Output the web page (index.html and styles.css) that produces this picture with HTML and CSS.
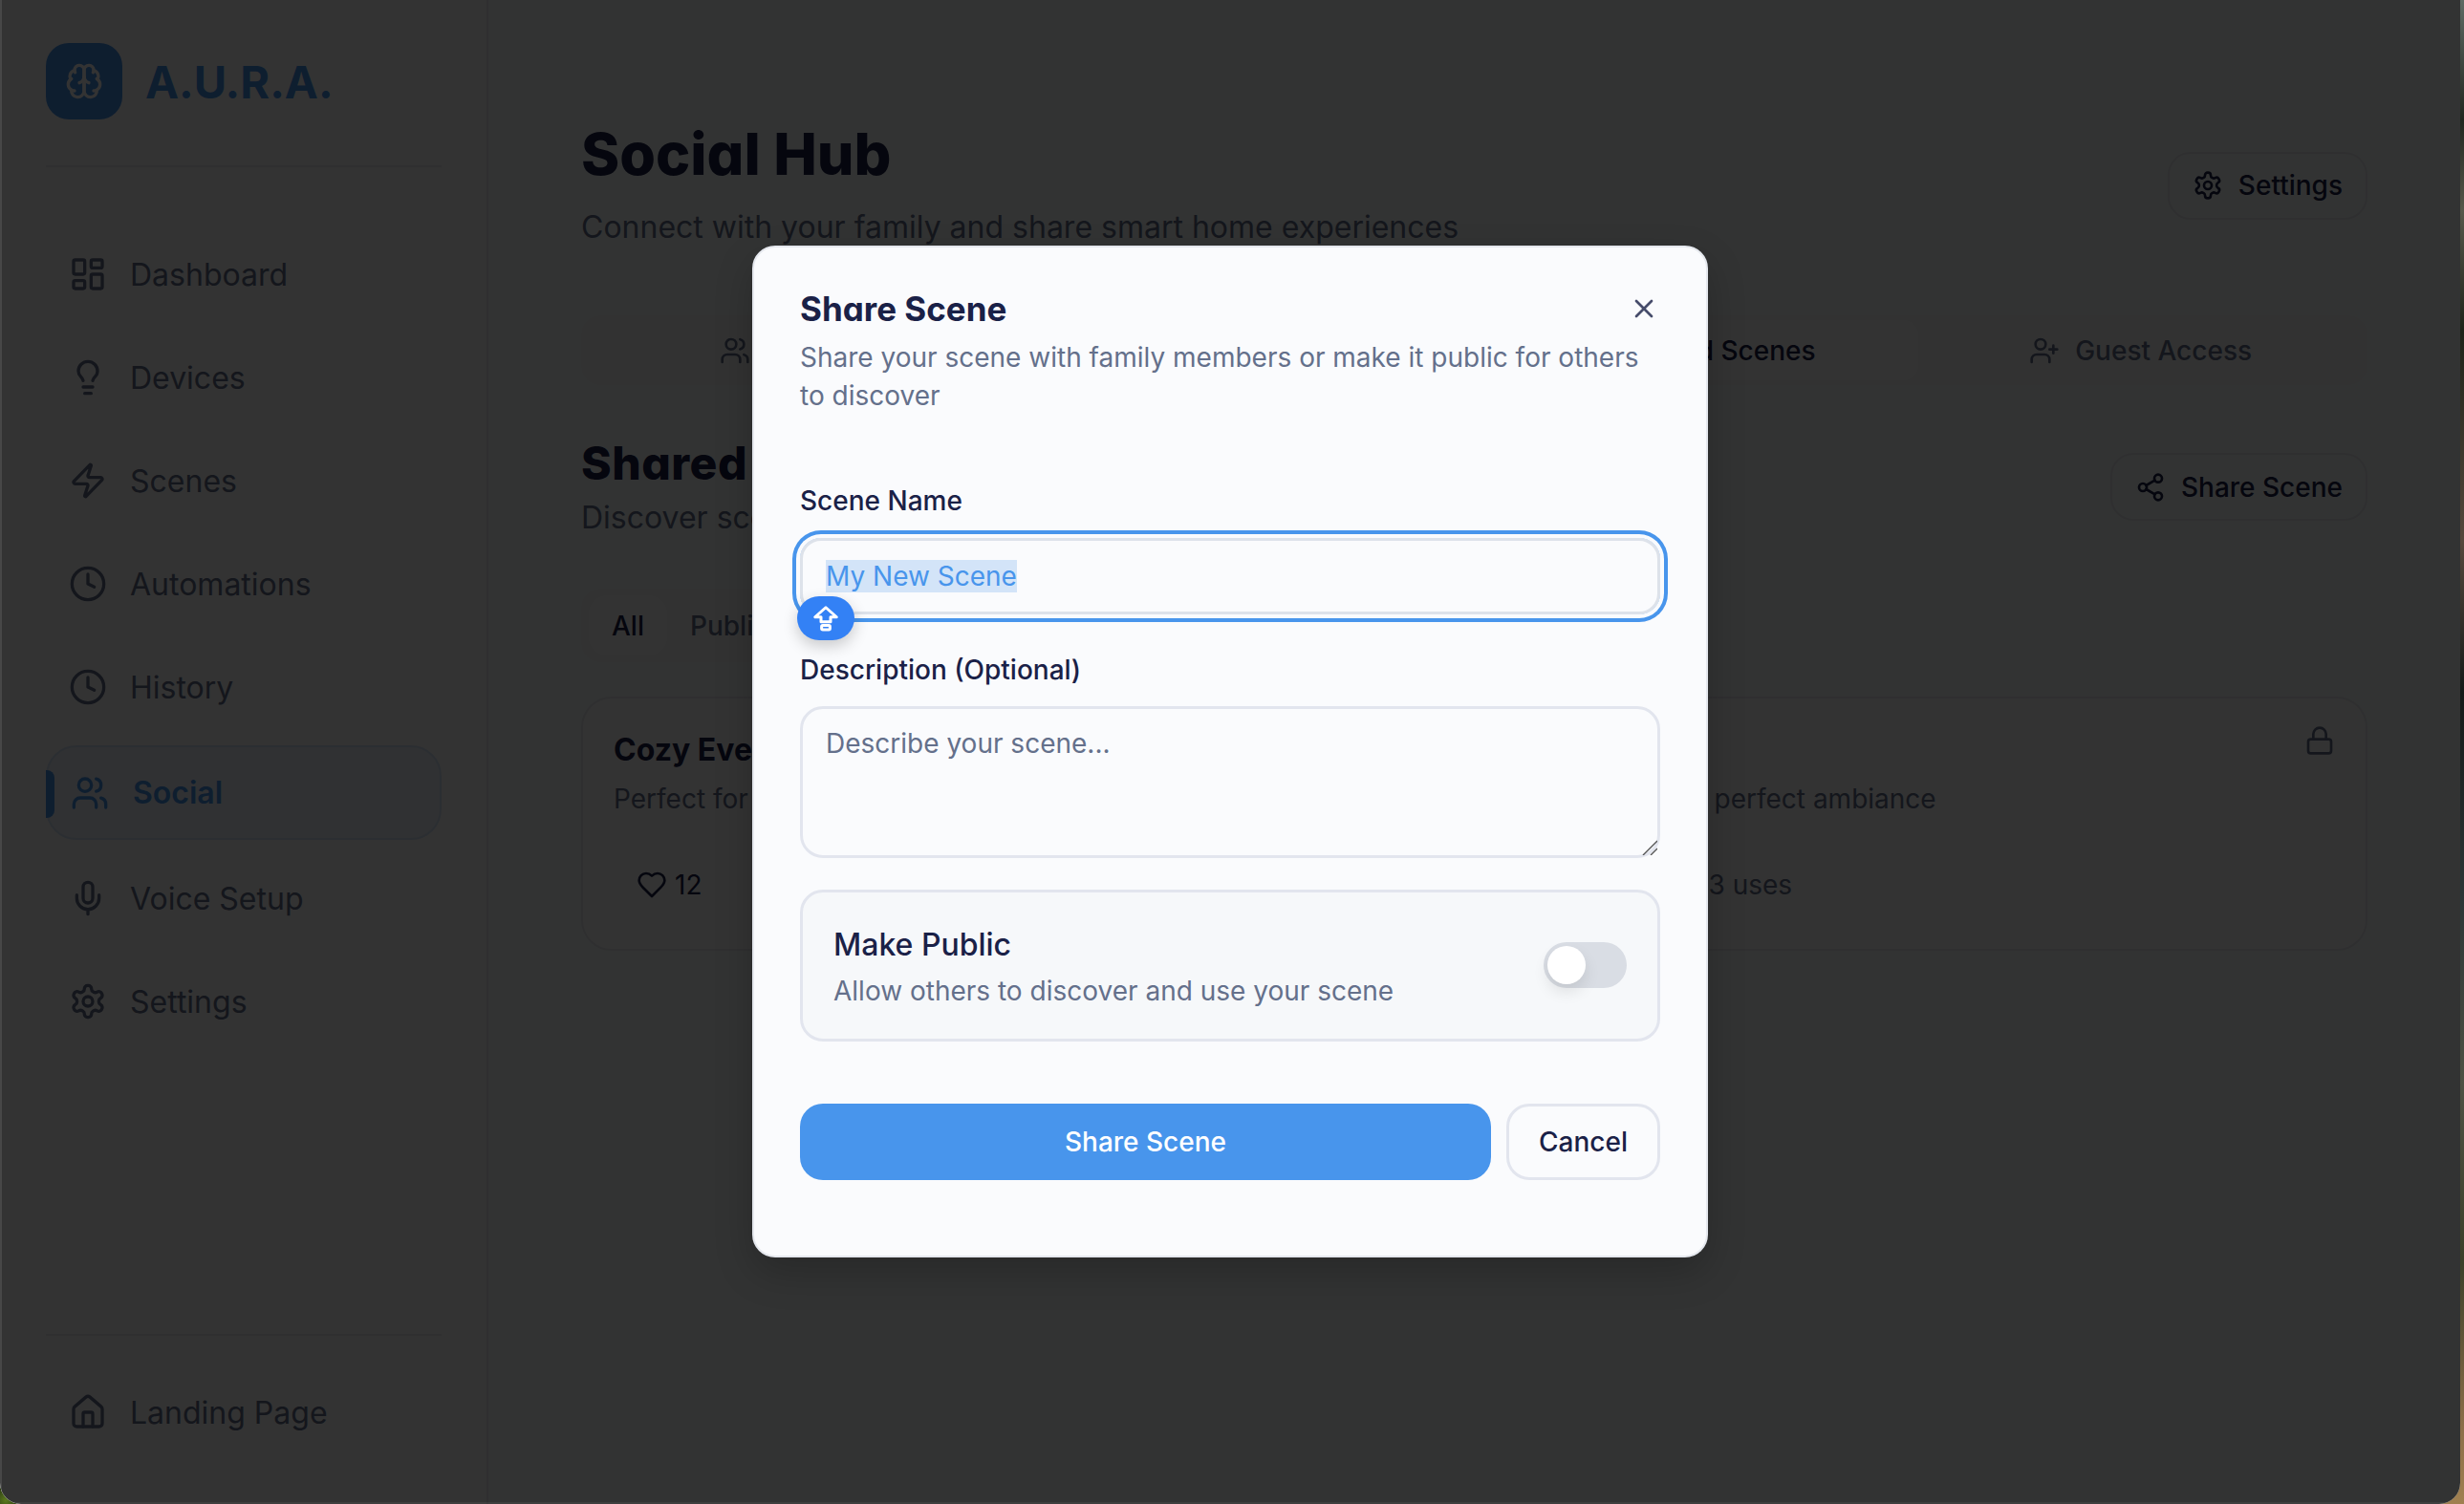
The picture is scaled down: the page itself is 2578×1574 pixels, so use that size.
FILE: index.html
```html
<!DOCTYPE html>
<html lang="en">
<head>
  <meta charset="UTF-8">
  <title>A.U.R.A. - Social Hub</title>
  <link rel="stylesheet" href="styles.css">
</head>
<body>
  <svg class="sprite" width="0" height="0">
    <symbol id="i-brain" viewBox="0 0 24 24"><path d="M12 5a3 3 0 1 0-5.997.125 4 4 0 0 0-2.526 5.77 4 4 0 0 0 .556 6.588A4 4 0 1 0 12 18Z"/><path d="M12 5a3 3 0 1 1 5.997.125 4 4 0 0 1 2.526 5.77 4 4 0 0 1-.556 6.588A4 4 0 1 1 12 18Z"/><path d="M15 13a4.5 4.5 0 0 1-3-4 4.5 4.5 0 0 1-3 4"/><path d="M17.599 6.5a3 3 0 0 0 .399-1.375"/><path d="M6.003 5.125A3 3 0 0 0 6.401 6.5"/><path d="M3.477 10.896a4 4 0 0 1 .585-.396"/><path d="M19.938 10.5a4 4 0 0 1 .585.396"/><path d="M6 18a4 4 0 0 1-1.967-.516"/><path d="M19.967 17.484A4 4 0 0 1 18 18"/></symbol>
    <symbol id="i-dashboard" viewBox="0 0 24 24"><rect x="3" y="3" width="7" height="9" rx="1"/><rect x="14" y="3" width="7" height="5" rx="1"/><rect x="14" y="12" width="7" height="9" rx="1"/><rect x="3" y="16" width="7" height="5" rx="1"/></symbol>
    <symbol id="i-bulb" viewBox="0 0 24 24"><path d="M15 14c.2-1 .7-1.7 1.5-2.5 1-.9 1.5-2.2 1.5-3.5A6 6 0 0 0 6 8c0 1 .2 2.2 1.5 3.5.7.7 1.3 1.5 1.5 2.5"/><path d="M9 18h6"/><path d="M10 22h4"/></symbol>
    <symbol id="i-zap" viewBox="0 0 24 24"><path d="M4 14a1 1 0 0 1-.78-1.63l9.9-10.2a.5.5 0 0 1 .86.46l-1.92 6.02A1 1 0 0 0 13 10h7a1 1 0 0 1 .78 1.63l-9.9 10.2a.5.5 0 0 1-.86-.46l1.92-6.02A1 1 0 0 0 11 14z"/></symbol>
    <symbol id="i-clock" viewBox="0 0 24 24"><circle cx="12" cy="12" r="10"/><polyline points="12 6 12 12 16 14"/></symbol>
    <symbol id="i-users" viewBox="0 0 24 24"><path d="M16 21v-2a4 4 0 0 0-4-4H6a4 4 0 0 0-4 4v2"/><circle cx="9" cy="7" r="4"/><path d="M22 21v-2a4 4 0 0 0-3-3.87"/><path d="M16 3.13a4 4 0 0 1 0 7.75"/></symbol>
    <symbol id="i-mic" viewBox="0 0 24 24"><path d="M12 2a3 3 0 0 0-3 3v7a3 3 0 0 0 6 0V5a3 3 0 0 0-3-3Z"/><path d="M19 10v2a7 7 0 0 1-14 0v-2"/><line x1="12" y1="19" x2="12" y2="22"/></symbol>
    <symbol id="i-gear" viewBox="0 0 24 24"><path d="M12.22 2h-.44a2 2 0 0 0-2 2v.18a2 2 0 0 1-1 1.73l-.43.25a2 2 0 0 1-2 0l-.15-.08a2 2 0 0 0-2.73.73l-.22.38a2 2 0 0 0 .73 2.73l.15.1a2 2 0 0 1 1 1.72v.51a2 2 0 0 1-1 1.74l-.15.09a2 2 0 0 0-.73 2.73l.22.38a2 2 0 0 0 2.73.73l.15-.08a2 2 0 0 1 2 0l.43.25a2 2 0 0 1 1 1.73V20a2 2 0 0 0 2 2h.44a2 2 0 0 0 2-2v-.18a2 2 0 0 1 1-1.73l.43-.25a2 2 0 0 1 2 0l.15.08a2 2 0 0 0 2.73-.73l.22-.39a2 2 0 0 0-.73-2.73l-.15-.08a2 2 0 0 1-1-1.74v-.5a2 2 0 0 1 1-1.74l.15-.09a2 2 0 0 0 .73-2.73l-.22-.38a2 2 0 0 0-2.73-.73l-.15.08a2 2 0 0 1-2 0l-.43-.25a2 2 0 0 1-1-1.73V4a2 2 0 0 0-2-2z"/><circle cx="12" cy="12" r="3"/></symbol>
    <symbol id="i-home" viewBox="0 0 24 24"><path d="M15 21v-8a1 1 0 0 0-1-1h-4a1 1 0 0 0-1 1v8"/><path d="M3 10a2 2 0 0 1 .709-1.528l7-5.999a2 2 0 0 1 2.582 0l7 5.999A2 2 0 0 1 21 10v9a2 2 0 0 1-2 2H5a2 2 0 0 1-2-2z"/></symbol>
    <symbol id="i-share" viewBox="0 0 24 24"><circle cx="18" cy="5" r="3"/><circle cx="6" cy="12" r="3"/><circle cx="18" cy="19" r="3"/><line x1="8.59" y1="13.51" x2="15.42" y2="17.49"/><line x1="15.41" y1="6.51" x2="8.59" y2="10.49"/></symbol>
    <symbol id="i-userplus" viewBox="0 0 24 24"><path d="M16 21v-2a4 4 0 0 0-4-4H6a4 4 0 0 0-4 4v2"/><circle cx="9" cy="7" r="4"/><line x1="19" y1="8" x2="19" y2="14"/><line x1="22" y1="11" x2="16" y2="11"/></symbol>
    <symbol id="i-lock" viewBox="0 0 24 24"><rect x="3" y="11" width="18" height="11" rx="2"/><path d="M7 11V7a5 5 0 0 1 10 0v4"/></symbol>
    <symbol id="i-heart" viewBox="0 0 24 24"><path d="M19 14c1.49-1.46 3-3.21 3-5.5A5.5 5.5 0 0 0 16.5 3c-1.76 0-3 .5-4.5 2-1.5-1.5-2.74-2-4.5-2A5.5 5.5 0 0 0 2 8.5c0 2.3 1.5 4.05 3 5.5l7 7Z"/></symbol>
    <symbol id="i-x" viewBox="0 0 24 24"><path d="M18 6 6 18"/><path d="m6 6 12 12"/></symbol>
  </svg>

  <div class="window">
    <!-- Sidebar -->
    <aside class="sidebar">
      <div class="brand">
        <div class="brand-logo"><svg class="icon icon-lg"><use href="#i-brain"/></svg></div>
        <span class="brand-name">A.U.R.A.</span>
      </div>
      <nav class="nav">
        <a class="nav-item"><svg class="icon icon-lg"><use href="#i-dashboard"/></svg>Dashboard</a>
        <a class="nav-item"><svg class="icon icon-lg"><use href="#i-bulb"/></svg>Devices</a>
        <a class="nav-item"><svg class="icon icon-lg"><use href="#i-zap"/></svg>Scenes</a>
        <a class="nav-item"><svg class="icon icon-lg"><use href="#i-clock"/></svg>Automations</a>
        <a class="nav-item"><svg class="icon icon-lg"><use href="#i-clock"/></svg>History</a>
        <a class="nav-item active"><svg class="icon icon-lg"><use href="#i-users"/></svg>Social</a>
        <a class="nav-item"><svg class="icon icon-lg"><use href="#i-mic"/></svg>Voice Setup</a>
        <a class="nav-item"><svg class="icon icon-lg"><use href="#i-gear"/></svg>Settings</a>
      </nav>
      <div class="sidebar-foot">
        <a class="nav-item"><svg class="icon icon-lg"><use href="#i-home"/></svg>Landing Page</a>
      </div>
    </aside>

    <!-- Page content -->
    <main class="content">
      <header class="page-head">
        <div>
          <h1>Social Hub</h1>
          <p class="page-sub">Connect with your family and share smart home experiences</p>
        </div>
        <button class="btn-outline"><svg class="icon"><use href="#i-gear"/></svg>Settings</button>
      </header>

      <div class="tabs">
        <div class="tab"><svg class="icon"><use href="#i-users"/></svg>My Family</div>
        <div class="tab"><svg class="icon"><use href="#i-users"/></svg>Activity</div>
        <div class="tab active"><svg class="icon"><use href="#i-share"/></svg>Shared Scenes</div>
        <div class="tab"><svg class="icon"><use href="#i-userplus"/></svg>Guest Access</div>
      </div>

      <section class="section-head">
        <div>
          <h2>Shared Scenes</h2>
          <p class="section-sub">Discover scenes from your family</p>
        </div>
        <button class="btn-outline"><svg class="icon"><use href="#i-share"/></svg>Share Scene</button>
      </section>

      <div class="filters">
        <span class="filter active">All</span>
        <span class="filter">Public</span>
      </div>

      <article class="scene-card">
        <div class="scene-top">
          <h3>Cozy Evening</h3>
          <svg class="icon"><use href="#i-lock"/></svg>
        </div>
        <p class="scene-desc">Perfect for chilled movie nights with dimmed lights, soft music and warm colors for the perfect ambiance</p>
        <div class="scene-meta">
          <span class="likes"><svg class="icon"><use href="#i-heart"/></svg>12</span>
          <span class="uses">3 uses</span>
        </div>
      </article>
    </main>

    <!-- Share dialog -->
    <div class="overlay">
      <div class="modal">
        <button class="modal-close"><svg class="icon"><use href="#i-x"/></svg></button>
        <h2 class="modal-title">Share Scene</h2>
        <p class="modal-desc">Share your scene with family members or make it public for others to discover</p>

        <label class="field-label label-name">Scene Name</label>
        <div class="field-name">
          <div class="input"><span class="selected">My New Scene</span></div>
          <span class="chip">
            <svg viewBox="0 0 24 24"><path d="M12 3 3 11h5v4h8v-4h5z"/><rect x="8.5" y="18" width="7" height="3.5" rx="1"/></svg>
          </span>
        </div>

        <label class="field-label label-desc">Description (Optional)</label>
        <div class="textarea-wrap">
          <textarea class="textarea" placeholder="Describe your scene..."></textarea>
          <svg class="grip" viewBox="0 0 16 16"><path d="M1 16 16 1M9 16l7-7"/></svg>
        </div>

        <div class="public-box">
          <div class="public-text">
            <div class="public-title">Make Public</div>
            <div class="public-sub">Allow others to discover and use your scene</div>
          </div>
          <span class="toggle"><span class="knob"></span></span>
        </div>

        <div class="modal-actions">
          <button class="btn-primary">Share Scene</button>
          <button class="btn-cancel">Cancel</button>
        </div>
      </div>
    </div>
  </div>
</body>
</html>
```

FILE: styles.css
```css
* {
  margin: 0;
  padding: 0;
  box-sizing: border-box;
}

html, body {
  height: 100%;
}

body {
  overflow: hidden;
  font-family: "Inter", "Liberation Sans", sans-serif;
  color: #1a2147;
  background:
    radial-gradient(circle at 6px 1570px, #5c7a1e 0, #2a3a12 14px, transparent 24px),
    linear-gradient(180deg, #5d6a63 0%, #20271f 8%, #56584a 14%, #1d2318 22%, #55483c 36%, #141a18 46%, #2b3636 60%, #4d5143 72%, #3b4029 84%, #8c6e48 95%, #a08050 100%);
}

.sprite {
  position: absolute;
}

.window {
  position: relative;
  display: flex;
  width: 2574px;
  height: 1574px;
  overflow: hidden;
  background: #fbfffe;
  border-radius: 0 0 22px 22px;
}

.icon {
  width: 32px;
  height: 32px;
  flex: none;
  fill: none;
  stroke: currentColor;
  stroke-width: 2;
  stroke-linecap: round;
  stroke-linejoin: round;
}

.icon-lg {
  width: 40px;
  height: 40px;
}

/* Sidebar */
.sidebar {
  display: flex;
  flex-direction: column;
  width: 511px;
  flex: none;
  padding: 46px 47px 0 48px;
  background: #fff;
  border-right: 2px solid #e8ebf0;
}

.brand {
  display: flex;
  align-items: center;
  gap: 24px;
  height: 129px;
  padding-bottom: 49px;
  border-bottom: 2px solid #e8ebf0;
}

.brand-logo {
  display: flex;
  align-items: center;
  justify-content: center;
  width: 80px;
  height: 80px;
  border-radius: 24px;
  background: #4895ec;
  color: #fff;
}

.brand-name {
  font-size: 47px;
  font-weight: 700;
  font-feature-settings: "cv11";
  color: #4895ec;
}

.nav {
  display: flex;
  flex-direction: column;
  gap: 14px;
  margin-top: 65px;
  flex: 1;
}

.nav-item {
  position: relative;
  display: flex;
  align-items: center;
  gap: 24px;
  height: 94px;
  padding-left: 24px;
  font-size: 32px;
  color: #64708b;
}

.nav-item.active {
  height: 99px;
  gap: 25px;
  padding-left: 24px;
  border: 2px solid #d8e6f8;
  border-radius: 32px;
  background: #edf4fc;
  font-weight: 600;
  color: #4895ec;
}

.nav-item.active::before {
  content: "";
  position: absolute;
  left: -2px;
  top: 24px;
  width: 9px;
  height: 50px;
  border-radius: 0 8px 8px 0;
  background: #4895ec;
}

.sidebar-foot {
  height: 178px;
  padding-top: 33px;
  border-top: 2px solid #e8ebf0;
}

/* Content */
.content {
  flex: 1;
  padding: 0 97px;
}

.page-head, .section-head {
  display: flex;
  justify-content: space-between;
  align-items: center;
}

.page-head {
  padding-top: 122px;
}

h1 {
  font-size: 61px;
  line-height: 78px;
  font-weight: 800;
  font-feature-settings: "cv11";
  color: #1a2147;
}

.page-sub {
  margin-top: 18px;
  font-size: 32px;
  line-height: 40px;
  color: #64708b;
}

.btn-outline {
  display: flex;
  align-items: center;
  gap: 16px;
  height: 71px;
  padding: 0 24px;
  border: 2px solid #e8ebf0;
  border-radius: 24px;
  background: transparent;
  font: 500 28px "Inter", sans-serif;
  color: #1a2147;
}

.page-head .btn-outline {
  margin-top: 8px;
}

.section-head .btn-outline {
  margin-top: 2px;
}

.tabs {
  display: grid;
  grid-template-columns: repeat(4, 1fr);
  height: 73px;
  margin-top: 72px;
  padding: 5px;
  border-radius: 20px;
  background: #f9fbfb;
}

.tab {
  display: flex;
  align-items: center;
  justify-content: center;
  gap: 16px;
  border-radius: 16px;
  font-size: 28px;
  font-weight: 500;
  color: #64708b;
}

.tab.active {
  background: #fff;
  color: #1a2147;
}

.section-head {
  margin-top: 52px;
}

h2 {
  font-size: 48px;
  line-height: 60px;
  font-weight: 800;
  letter-spacing: 0.5px;
  font-feature-settings: "cv11";
}

.section-sub {
  margin-top: 7px;
  font-size: 32px;
  line-height: 40px;
  color: #64708b;
}

.filters {
  display: flex;
  width: fit-content;
  height: 77px;
  margin-top: 54px;
  padding: 7px 7px 7px 8px;
  border-radius: 20px;
  background: #f9fbfb;
  font-size: 28px;
  font-weight: 500;
}

.filter {
  display: flex;
  align-items: center;
  padding: 0 24px;
  border-radius: 20px;
  color: #64708b;
}

.filter.active {
  background: #fff;
  color: #1a2147;
}

.scene-card {
  height: 266px;
  margin-top: 36px;
  padding: 30px 32px 0;
  border: 2px solid #e8ebf0;
  border-radius: 32px;
  background: #fff;
}

.scene-top {
  display: flex;
  justify-content: space-between;
  align-items: flex-start;
  color: #64708b;
}

.scene-top .icon {
  margin-top: -2px;
}

h3 {
  margin-top: 4px;
  font-size: 32px;
  line-height: 40px;
  font-weight: 700;
  font-feature-settings: "cv11";
  color: #1a2147;
}

.scene-desc {
  margin-top: 11px;
  font-size: 28px;
  line-height: 40px;
  color: #64708b;
}

.scene-meta {
  display: flex;
  align-items: center;
  gap: 60px;
  margin-top: 53px;
  font-size: 28px;
  color: #64708b;
}

.likes {
  display: flex;
  align-items: center;
  gap: 8px;
  padding-left: 24px;
  color: #1a2147;
}

.uses {
  margin-left: 993px;
}

/* Dialog */
.overlay {
  position: absolute;
  inset: 0;
  display: flex;
  align-items: center;
  justify-content: center;
  padding-bottom: 2px;
  background: rgba(0, 0, 0, 0.8);
  box-shadow: inset 2px 0 0 rgba(255, 255, 255, 0.1), inset 0 -2px 0 rgba(255, 255, 255, 0.06);
}

.modal {
  position: relative;
  width: 1000px;
  height: 1059px;
  padding: 42px 48px;
  border: 2px solid #e5e8ee;
  border-radius: 24px;
  background: #fafbfd;
  box-shadow: 0 16px 40px rgba(0, 0, 0, 0.2);
}

.modal-close {
  position: absolute;
  top: 48px;
  right: 49px;
  display: flex;
  border: none;
  background: none;
  color: #1a2147;
  opacity: 0.8;
}

.modal-title {
  font-size: 35px;
  line-height: 44px;
  font-weight: 700;
  letter-spacing: 0;
  font-feature-settings: "cv11";
}

.modal-desc {
  margin-top: 9px;
  font-size: 28px;
  line-height: 40px;
  color: #64708b;
}

.field-label {
  display: block;
  font-size: 28px;
  line-height: 36px;
  font-weight: 500;
}

.label-name {
  margin-top: 72px;
}

.field-name {
  position: relative;
  margin-top: 21px;
}

.input {
  display: flex;
  align-items: center;
  height: 80px;
  padding: 0 24px;
  border: 3px solid #dde2ea;
  border-radius: 22px;
  box-shadow: 0 0 0 4px #fafbfd, 0 0 0 8px #4895ec;
  font-size: 28px;
}

.selected {
  background: #d3e4f8;
  line-height: 34px;
  color: #4895ec;
}

.chip {
  position: absolute;
  left: -3px;
  top: 61px;
  display: flex;
  align-items: center;
  justify-content: center;
  width: 60px;
  height: 46px;
  border-radius: 23px;
  background: #3381f5;
  box-shadow: 0 6px 16px rgba(0, 0, 0, 0.2);
}

.chip svg {
  width: 30px;
  height: 30px;
  fill: none;
  stroke: #fff;
  stroke-width: 2.4;
  stroke-linejoin: round;
}

.label-desc {
  margin-top: 40px;
}

.textarea-wrap {
  position: relative;
  margin-top: 20px;
}

.textarea {
  display: block;
  width: 100%;
  height: 159px;
  padding: 18px 24px;
  border: 3px solid #e2e5ee;
  border-radius: 24px;
  background: transparent;
  font: 400 28px/36px "Inter", sans-serif;
  outline: none;
  resize: none;
}

.textarea::placeholder {
  color: #64708b;
}

.grip {
  position: absolute;
  right: 3px;
  bottom: 3px;
  width: 16px;
  height: 16px;
  fill: none;
  stroke: #555;
  stroke-width: 1.4;
}

.public-box {
  display: flex;
  align-items: center;
  justify-content: space-between;
  height: 159px;
  margin-top: 33px;
  padding: 0 32px;
  border: 3px solid #e2e5ee;
  border-radius: 24px;
  background: #f6f8fa;
}

.public-text {
  padding-top: 6px;
}

.public-title {
  font-size: 32px;
  line-height: 40px;
  font-weight: 500;
}

.public-sub {
  margin-top: 8px;
  font-size: 28px;
  line-height: 40px;
  color: #64708b;
}

.toggle {
  display: flex;
  align-items: center;
  width: 87px;
  height: 48px;
  padding-left: 4px;
  border-radius: 24px;
  background: #d9dde4;
}

.knob {
  width: 40px;
  height: 40px;
  border-radius: 50%;
  background: #fff;
  box-shadow: 0 8px 16px rgba(0, 0, 0, 0.1);
}

.modal-actions {
  display: flex;
  gap: 16px;
  margin-top: 65px;
}

.btn-primary, .btn-cancel {
  height: 80px;
  border-radius: 24px;
  font: 500 28px "Inter", sans-serif;
}

.btn-primary {
  flex: 1;
  border: none;
  background: #4895ec;
  color: #fff;
}

.btn-cancel {
  width: 161px;
  border: 3px solid #e2e5ee;
  background: transparent;
  color: #1a2147;
}
```
